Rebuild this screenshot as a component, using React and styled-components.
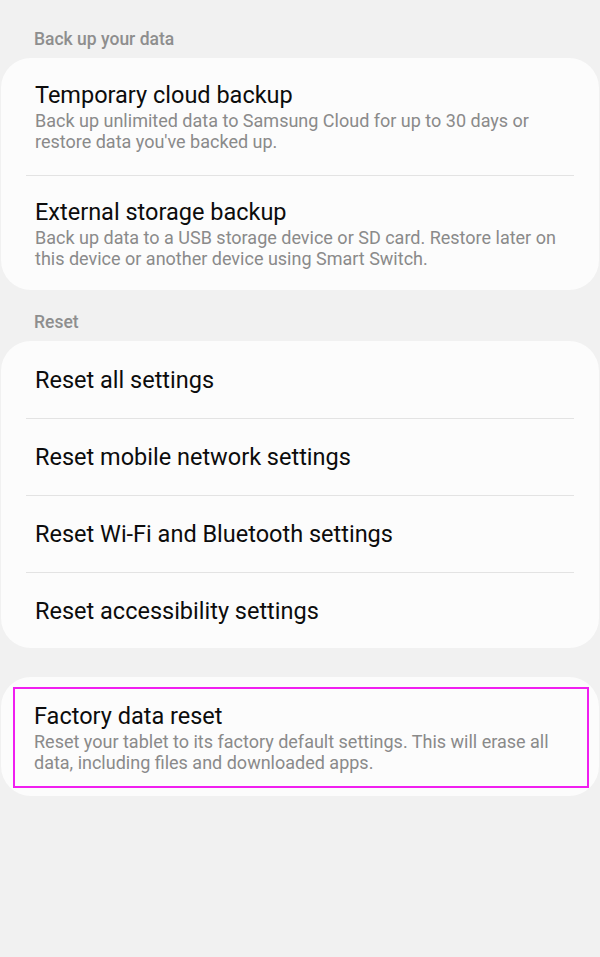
import styled, { createGlobalStyle } from "styled-components";

const GlobalStyle = createGlobalStyle`
    html, body {
        margin: 0;
        padding: 0;
        background: #f1f1f1;
        font-family: Roboto, "Noto Sans", "Liberation Sans", sans-serif;
    }
`;

const Page = styled.div`
    width: 600px;
    min-height: 957px;
    background: #f1f1f1;
    padding-top: 28px;
    box-sizing: border-box;
`;

const SectionHeader = styled.div`
    padding: 0 34px;
    height: 22px;
    line-height: 22px;
    font-size: 17.5px;
    font-weight: 500;
    color: #8e8e8e;
    margin-bottom: 8px;
`;

const Card = styled.div`
    margin: 0 1px ${props => props.gapBelow || 0}px;
    background: #fcfcfc;
    border-radius: 30px;
    padding: ${props => props.pad || "0"};
`;

const Row = styled.div`
    display: flex;
    flex-direction: column;
    justify-content: center;
    padding: 0 32px 0 34px;
    min-height: ${props => props.height || 0}px;
    box-sizing: border-box;
`;

const Divider = styled.div`
    height: 1px;
    margin: 0 25px;
    background: #e3e3e3;
`;

const Title = styled.div`
    font-size: 23.5px;
    line-height: 28px;
    color: #0c0c0c;
`;

const Summary = styled.div`
    font-size: 18px;
    line-height: 21px;
    color: #8a8a8a;
    margin-top: 1px;
`;

const Highlight = styled.div`
    margin: 0 10px 0 12px;
    border: 2px solid #f01ff0;
    padding: 13px 19px 13px 19px;
`;

function App() {
    return (
        <Page>
            <GlobalStyle />
            <SectionHeader>Back up your data</SectionHeader>
            <Card gapBelow={21}>
                <Row height={117}>
                    <Title>Temporary cloud backup</Title>
                    <Summary>Back up unlimited data to Samsung Cloud for up to 30 days or restore data you've backed up.</Summary>
                </Row>
                <Divider />
                <Row height={114}>
                    <Title>External storage backup</Title>
                    <Summary>Back up data to a USB storage device or SD card. Restore later on this device or another device using Smart Switch.</Summary>
                </Row>
            </Card>
            <SectionHeader>Reset</SectionHeader>
            <Card gapBelow={29}>
                <Row height={77}>
                    <Title>Reset all settings</Title>
                </Row>
                <Divider />
                <Row height={76}>
                    <Title>Reset mobile network settings</Title>
                </Row>
                <Divider />
                <Row height={76}>
                    <Title>Reset Wi‑Fi and Bluetooth settings</Title>
                </Row>
                <Divider />
                <Row height={75}>
                    <Title>Reset accessibility settings</Title>
                </Row>
            </Card>
            <Card pad="10px 0 8px">
                <Highlight>
                    <Title>Factory data reset</Title>
                    <Summary>Reset your tablet to its factory default settings. This will erase all data, including files and downloaded apps.</Summary>
                </Highlight>
            </Card>
        </Page>
    );
}

export default App;
